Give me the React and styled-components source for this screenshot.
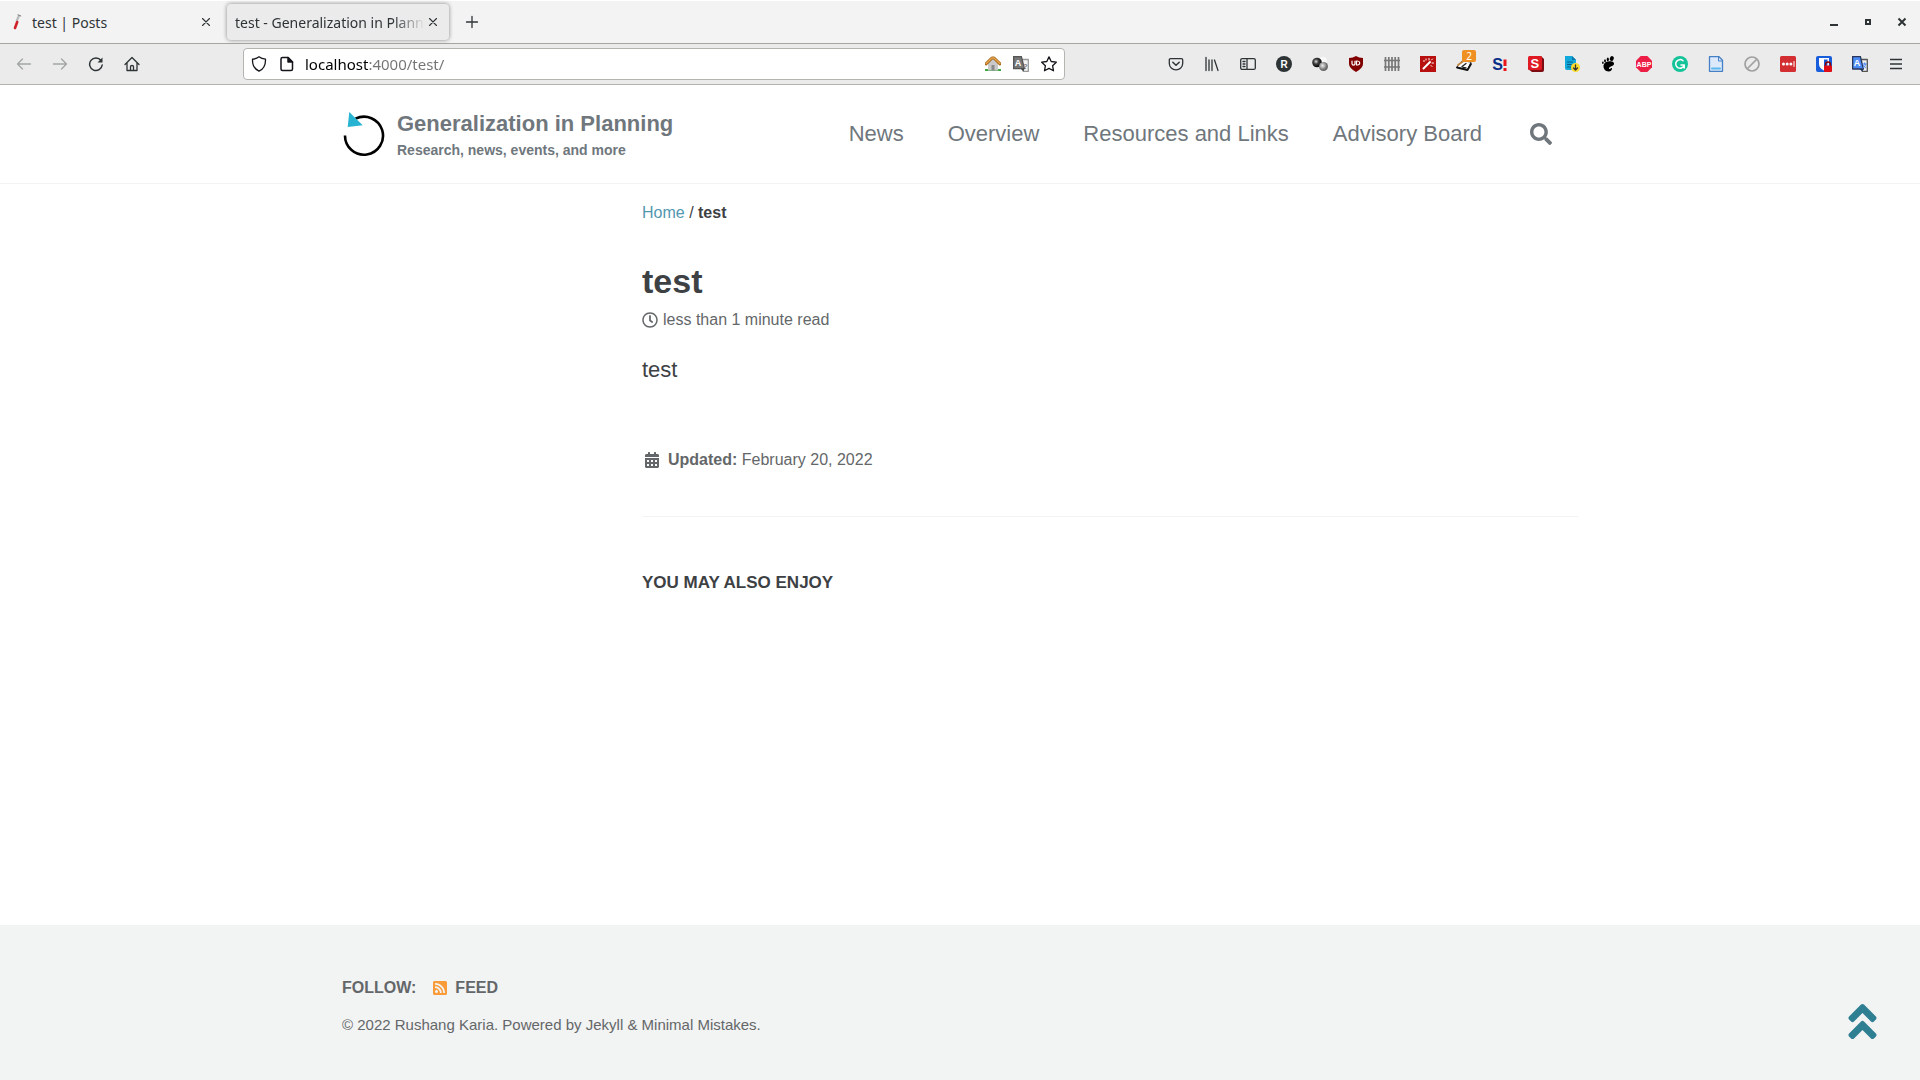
import React from 'react';
import styled, { createGlobalStyle, css } from 'styled-components';
import {
  FaSearch,
  FaRegClock,
  FaCalendarAlt,
  FaRssSquare,
  FaAngleDoubleUp,
} from 'react-icons/fa';

const GlobalStyle = createGlobalStyle`
  * {
    box-sizing: border-box;
  }
  body {
    margin: 0;
    background: #fff;
    color: #3d4144;
    font-family: "Liberation Sans", Arial, sans-serif;
    font-size: 16px;
  }
  button {
    padding: 0;
    border: 0;
    background: none;
    color: inherit;
    font: inherit;
  }
  a {
    color: inherit;
    text-decoration: none;
  }
`;

const chromeFont = '"Noto Sans", "Open Sans", sans-serif';
const ink = '#2e3436';

const Window = styled.div`
  display: flex;
  flex-direction: column;
  min-height: 100vh;
`;

/* browser chrome */

const TabStrip = styled.div`
  display: flex;
  align-items: center;
  height: 44px;
  padding-right: 1px;
  border-top: 1px solid #fff;
  border-bottom: 1px solid #a6a6a2;
  background: #f3f3f3;
  color: ${ink};
  font-family: ${chromeFont};
  font-size: 14px;
`;

const Tab = styled.div`
  display: flex;
  align-items: center;
  gap: 8px;
  width: 222px;
  height: 36px;
  padding: 0 8px;
  border-radius: 4px;
  ${props => props.$active && css`
    background: #ebebeb;
    box-shadow: 0 0 4px rgba(0, 0, 0, 0.45);
  `}
`;

const TabList = styled.div`
  display: flex;
  gap: 5px;
  flex: 1;
`;

const TabTitle = styled.span`
  flex: 1;
  min-width: 0;
  overflow: hidden;
  white-space: nowrap;
  ${props => props.$fade && css`
    mask-image: linear-gradient(to left, transparent, #000 32px);
  `}
`;

const TabClose = styled.button`
  display: flex;
  width: 16px;
  height: 16px;
  align-items: center;
  justify-content: center;
  margin-left: -8px;
`;

const IconButton = styled.button`
  display: flex;
  align-items: center;
  justify-content: center;
  position: relative;
  width: 36px;
  height: 36px;
  flex: none;
  color: ${props => (props.disabled ? '#a3a6a6' : ink)};
`;

const WindowButton = styled(IconButton)`
  width: 34px;
`;

const NavBar = styled.div`
  display: flex;
  align-items: center;
  height: 41px;
  padding: 0 6px;
  border-bottom: 1px solid #b4b4b0;
  background: #ebebeb;
  font-family: ${chromeFont};
`;

const NavGroup = styled.div`
  display: flex;
  flex: ${props => (props.$grow ? '1' : 'none')};
  justify-content: ${props => (props.$grow ? 'flex-end' : 'flex-start')};
`;

const AddressBar = styled.div`
  display: flex;
  align-items: center;
  flex: 0 1 822px;
  height: 32px;
  margin-left: 93px;
  padding: 0 1px;
  border: 1px solid #b4b4b0;
  border-radius: 4px;
  background: #fff;
`;

const AddressIcon = styled(IconButton)`
  width: 28px;
  height: 28px;
  color: #15141a;
`;

const Address = styled.input`
  flex: 1;
  min-width: 0;
  padding: 0;
  margin-left: 4px;
  border: 0;
  outline: 0;
  background: linear-gradient(to right, #000 64px, #737373 64px);
  background-clip: text;
  -webkit-text-fill-color: transparent;
  font-family: ${chromeFont};
  font-size: 15px;
`;

const Badge = styled.span`
  position: absolute;
  top: 4px;
  right: 6px;
  width: 14px;
  border-radius: 2px;
  background: #ef9022;
  color: #fff;
  font-size: 10px;
  line-height: 12px;
`;

/* site */

const Container = styled.div`
  width: 100%;
  max-width: 1280px;
  margin: 0 auto;
  padding: 0 22px;
`;

const Masthead = styled.header`
  padding: 25px 0 19px;
  border-bottom: 1px solid #f2f3f3;
  color: #6f777d;
`;

const MastheadInner = styled(Container)`
  display: flex;
  align-items: flex-start;
`;

const Brand = styled.a`
  display: flex;
  gap: 11px;
  flex: 1;
  font-size: 22px;
  font-weight: bold;
  line-height: 27px;
`;

const Tagline = styled.small`
  display: block;
  font-size: 14px;
`;

const SiteNav = styled.nav`
  display: flex;
  align-items: center;
  gap: 44px;
  font-size: 22px;
  line-height: 48px;
`;

const SearchButton = styled.button`
  display: flex;
  align-items: center;
  height: 46px;
  padding: 0 26px 0 4px;
`;

const Main = styled.main`
  flex: 1;
`;

const Page = styled(Container)`
  line-height: 24px;
`;

const Article = styled.div`
  margin-left: 300px;
  padding-top: 17px;
`;

const HomeLink = styled.a`
  color: #5297af;
`;

const Title = styled.h1`
  margin: 34px 0 5px;
  font-size: 34px;
  line-height: 44px;
`;

const Meta = styled.p`
  display: flex;
  align-items: center;
  gap: 5px;
  margin: 0;
  color: #646769;
`;

const Updated = styled(Meta)`
  gap: 8px;
  padding-left: 2px;
`;

const Body = styled.p`
  margin: 22px 0 62px;
  font-size: 22px;
  line-height: 32px;
`;

const Related = styled.section`
  margin-top: 44px;
  padding-top: 54px;
  border-top: 1px solid #f2f3f3;
`;

const RelatedTitle = styled.h2`
  margin: 0;
  font-size: 17px;
  text-transform: uppercase;
`;

const Footer = styled.footer`
  padding: 51px 0 43px;
  background: #f2f3f3;
  color: #646769;
  line-height: 24px;
`;

const Follow = styled.div`
  display: flex;
  align-items: center;
  gap: 16px;
  margin-bottom: 13px;
  font-weight: bold;
  text-transform: uppercase;
`;

const FeedLink = styled.a`
  display: flex;
  align-items: center;
  gap: 7px;
`;

const Copyright = styled.div`
  font-size: 15px;
`;

const TopLink = styled.a`
  position: fixed;
  right: 35px;
  bottom: 36px;
  display: flex;
  color: #2f7f93;
  font-size: 45px;
`;

const Icon = ({ size = 16, children, ...rest }) => (
  <svg
    width={size}
    height={size}
    viewBox="0 0 16 16"
    fill="none"
    stroke="currentColor"
    strokeWidth="1.3"
    strokeLinecap="round"
    strokeLinejoin="round"
    aria-hidden="true"
    {...rest}
  >
    {children}
  </svg>
);

const Glyph = ({ x = 8, y = 12, size = 10, fill = '#fff', children }) => (
  <text
    x={x}
    y={y}
    fill={fill}
    stroke="none"
    fontFamily="Liberation Sans, Arial, sans-serif"
    fontSize={size}
    fontWeight="bold"
    textAnchor="middle"
  >
    {children}
  </text>
);

const CloseIcon = () => (
  <Icon strokeWidth="1.1"><path d="M4.500 4.500l7 7M11.500 4.500l-7 7" /></Icon>
);

const Logo = () => (
  <svg width="44" height="48" viewBox="0 0 44 48" aria-hidden="true">
    <path d="M3 25.5A19 19 0 1 0 13.5 8.7" fill="none" stroke="#000" strokeWidth="2.6" />
    <path d="M7.3 2L5.7 17L20.7 15.3Z" fill="#27b3d2" />
  </svg>
);

const extensions = [
  {
    name: 'Save to Pocket',
    icon: (
      <Icon>
        <path d="M2.5 2.6h11q1.2 0 1.2 1.2v3.6a6.7 6.4 0 0 1-13.4 0V3.8q0-1.2 1.2-1.2z" />
        <path d="M4.8 6.2L8 9.2l3.2-3" strokeWidth="1.5" />
      </Icon>
    ),
  },
  {
    name: 'Library',
    icon: <Icon><path d="M2 1.5v13M5 4v10.500M8 4v10.500M10.500 4l3.500 10.500" /></Icon>,
  },
  {
    name: 'Sidebars',
    icon: (
      <Icon>
        <rect x=".7" y="2.600" width="14.600" height="10.800" rx="1.500" />
        <path d="M7 2.600v10.800M3 5.500h2M3 8h2M3 10.500h2" />
      </Icon>
    ),
  },
  {
    name: 'Reader',
    icon: (
      <Icon>
        <circle cx="8" cy="8" r="8" fill={ink} stroke="none" />
        <Glyph y={11.500}>R</Glyph>
      </Icon>
    ),
  },
  {
    name: 'Spheres',
    icon: (
      <Icon stroke="none">
        <defs>
          <radialGradient id="darkBall" cx=".4" cy=".4">
            <stop offset="0" stopColor="#ddd" />
            <stop offset=".5" stopColor="#444" />
            <stop offset="1" stopColor="#111" />
          </radialGradient>
          <radialGradient id="greyBall" cx=".4" cy=".4">
            <stop offset="0" stopColor="#eee" />
            <stop offset="1" stopColor="#666" />
          </radialGradient>
        </defs>
        <circle cx="11" cy="4.500" r="3.800" fill="#f8f8f8" />
        <circle cx="5" cy="6.500" r="4.800" fill="url(#darkBall)" />
        <circle cx="11.500" cy="10.500" r="4.500" fill="url(#greyBall)" />
      </Icon>
    ),
  },
  {
    name: 'uBlock Origin',
    icon: (
      <Icon stroke="none">
        <path d="M8 0q3 2 7 2v6q0 4-7 8Q1 12 1 8V2q4 0 7-2z" fill="#800000" />
        <path d="M4 5v2.500q0 1.700 1.500 1.700T7 7.500V5M8.500 9V5h1q2 0 2.300 2-.3 2-2.300 2z" stroke="#fff" strokeWidth="1.200" />
      </Icon>
    ),
  },
  {
    name: 'Fence',
    icon: (
      <Icon stroke="#777" strokeLinecap="butt">
        <path d="M1.500 1v14M4.800 1v14M8 1v14M11.200 1v14M14.500 1v14" strokeWidth="1.700" />
        <path d="M0 4.500h16M0 11h16" />
      </Icon>
    ),
  },
  {
    name: 'Magic Wand',
    icon: (
      <Icon stroke="#fff">
        <rect width="16" height="16" fill="#b7100f" stroke="none" />
        <path d="M3.500 12.500L10 6" strokeWidth="2" />
        <path d="M6 3v1M9 2.500v1.500M12.500 3l-1 1M12 7h1.500M11 9.500l1 1M3.500 5h1" strokeWidth="1" />
      </Icon>
    ),
  },
  {
    name: 'Notes',
    badge: '2',
    icon: (
      <Icon>
        <path d="M1 11l5-6 9 1-3.500 7.500z" fill="#fff" stroke="#333" strokeWidth="1" />
        <path d="M1 11.500l10.500 2.500L15 8" stroke="#111" strokeWidth="1.800" />
        <path d="M2 9l7-5" stroke="#c48948" strokeWidth="2" />
        <path d="M6 10.500l4-3M7 11.500l3 .3" stroke="#222" />
      </Icon>
    ),
  },
  {
    name: 'Startpage',
    icon: (
      <Icon>
        <Glyph x={5.500} y={13.500} size={16} fill="#092f88">S</Glyph>
        <path d="M13 3.500v6.500" stroke="#e9151b" strokeWidth="3" strokeLinecap="butt" />
        <path d="M13 12v3" stroke="#e9151b" strokeWidth="3" strokeLinecap="butt" />
      </Icon>
    ),
  },
  {
    name: 'Stylish',
    icon: (
      <Icon stroke="none">
        <path d="M2 0h11l3 3v11q0 2-2 2H4l-4-3z" fill="#7d0c12" />
        <rect width="14" height="14" rx="1.500" fill="#df1a22" />
        <Glyph x={6.800} y={11.500} size={13}>S</Glyph>
      </Icon>
    ),
  },
  {
    name: 'Save Page',
    icon: (
      <Icon stroke="none">
        <path d="M1 0h7l4 4v10H3q-2 0-2-2z" fill="#11a9dc" />
        <path d="M8 0v4h4z" fill="#0877a7" />
        <path d="M3.500 6h5M3.500 8.500h5M3.500 11h3" stroke="#075b82" strokeWidth="1" />
        <circle cx="11.500" cy="11.500" r="4.500" fill="#fcdb2e" />
        <path d="M11.500 9v5M9.500 12l2 2 2-2" stroke="#333" />
      </Icon>
    ),
  },
  {
    name: 'GNOME Shell',
    icon: (
      <Icon fill="#000" stroke="none">
        <path d="M12 5.500c-4-1-8 .5-8.500 4-.4 3 2 6 5 6 2.500 0 3.500-1.700 3.500-3.200 0-.6-.6-.5-1 0-.8 1.200-2.300 1-2-.2.500-2 5.300-2 5-4.700-.1-1-.9-1.600-2-1.900z" />
        <ellipse cx="11.800" cy="2.500" rx="1.900" ry="2.500" transform="rotate(20 11.800 2.500)" />
        <ellipse cx="7.800" cy="3.400" rx="1.100" ry="1.800" />
        <ellipse cx="5" cy="4.800" rx=".9" ry="1.500" />
        <ellipse cx="2.900" cy="6.700" rx=".8" ry="1.200" />
      </Icon>
    ),
  },
  {
    name: 'Adblock Plus',
    icon: (
      <Icon stroke="none">
        <path d="M4.700 0h6.600L16 4.700v6.600L11.300 16H4.700L0 11.300V4.700z" fill="#ed1e45" />
        <Glyph y={10.500} size={7}>ABP</Glyph>
      </Icon>
    ),
  },
  {
    name: 'Grammarly',
    icon: (
      <Icon>
        <circle cx="8" cy="8" r="8" fill="#15c39a" stroke="none" />
        <path d="M11 4.800A4.300 4.300 0 1 0 12.200 9H9M12.200 9v3" stroke="#fff" strokeWidth="1.500" />
      </Icon>
    ),
  },
  {
    name: 'Document',
    icon: (
      <Icon>
        <path d="M1.500.7h9.500l3.500 3.500v11.100h-13z" fill="#dce9fb" stroke="#4580c6" />
        <path d="M10.500 1v4h4" stroke="#4580c6" strokeWidth="1" />
        <path d="M4 12.500h8" stroke="#5eb9ec" strokeWidth="2" />
      </Icon>
    ),
  },
  {
    name: 'Blocker',
    icon: (
      <Icon stroke="#a0a0a0" strokeWidth="1.700">
        <circle cx="8" cy="8" r="7" />
        <path d="M4 12l8-8" />
      </Icon>
    ),
  },
  {
    name: 'LastPass',
    icon: (
      <Icon stroke="none">
        <rect width="16" height="16" rx="1.500" fill="#d32f32" />
        <circle cx="3.500" cy="8" r="1.500" fill="#fff" />
        <circle cx="7.200" cy="8" r="1.500" fill="#fff" />
        <circle cx="10.900" cy="8" r="1.500" fill="#fff" />
        <path d="M14 5.500v5" stroke="#fff" strokeWidth="1" />
      </Icon>
    ),
  },
  {
    name: 'Bitwarden',
    icon: (
      <Icon stroke="none">
        <rect width="16" height="16" rx="2" fill="#175ddc" />
        <path d="M3 2h10v6q0 4-5 6.500Q3 12 3 8z" fill="#fff" />
        <path d="M8 3.500h3.500V8q0 2.500-3.500 4.500z" fill="#175ddc" />
        <path d="M9.500 10V8.500a2.500 2.500 0 0 1 5 0V10" stroke="#8b0000" />
        <rect x="8" y="9.500" width="8" height="6.500" rx="1" fill="#e00d16" />
      </Icon>
    ),
  },
  {
    name: 'Translate',
    icon: (
      <Icon>
        <path d="M8 3.500h7.300v12h-5z" fill="#eee" stroke="#555" />
        <path d="M.6.600h7.800l3 12.400H.6z" fill="#4d8bf5" stroke="#28365d" />
        <path d="M7.500 13l3 2.600.9-2.600z" fill="#28365d" stroke="none" />
        <Glyph x={5} y={10} size={9}>A</Glyph>
        <path d="M10.800 8h3.500M12.500 7v1M13.800 8q-.5 3-2.800 4M11.500 9.500l2.300 2.500" stroke="#4d8bf5" strokeWidth="1" />
      </Icon>
    ),
  },
  {
    name: 'Open menu',
    icon: <Icon strokeWidth="1.300" strokeLinecap="butt"><path d="M2 3.500h12M2 8h12M2 12.500h12" /></Icon>,
  },
];

const links = ['News', 'Overview', 'Resources and Links', 'Advisory Board'];

const BrowserTabs = () => (
  <TabStrip>
    <TabList>
      <Tab>
        <Icon>
          <path d="M8.500 7.500L11 1.500" stroke="#b9b9b9" strokeWidth="2.200" strokeLinecap="butt" />
          <path d="M10 .8l2.800 1.200" stroke="#777" strokeWidth="1" />
          <path d="M7 14L9.200 8" stroke="#cf222b" strokeWidth="2.600" />
        </Icon>
        <TabTitle>test | Posts</TabTitle>
        <TabClose aria-label="Close tab"><CloseIcon /></TabClose>
      </Tab>
      <Tab $active>
        <TabTitle $fade>test - Generalization in Planning</TabTitle>
        <TabClose aria-label="Close tab"><CloseIcon /></TabClose>
      </Tab>
      <IconButton aria-label="New tab">
        <Icon><path d="M8 2.500v11M2.500 8h11" /></Icon>
      </IconButton>
    </TabList>
    <WindowButton aria-label="Minimize">
      <Icon strokeWidth="2" strokeLinecap="butt"><path d="M4 11h8" /></Icon>
    </WindowButton>
    <WindowButton aria-label="Restore">
      <Icon strokeWidth="2" strokeLinejoin="miter"><path d="M6 6h4v4H6z" /></Icon>
    </WindowButton>
    <WindowButton aria-label="Close window">
      <Icon strokeWidth="2" strokeLinecap="butt"><path d="M4.500 4.500l7 7M11.500 4.500l-7 7" /></Icon>
    </WindowButton>
  </TabStrip>
);

const BrowserToolbar = () => (
  <NavBar>
    <NavGroup>
      <IconButton disabled aria-label="Back">
        <Icon><path d="M14.500 8h-13M6.500 3L1.500 8l5 5" /></Icon>
      </IconButton>
      <IconButton disabled aria-label="Forward">
        <Icon><path d="M1.500 8h13M9.500 3l5 5-5 5" /></Icon>
      </IconButton>
      <IconButton aria-label="Reload">
        <Icon strokeWidth="1.500">
          <path d="M13 4.500A6.300 6.300 0 1 0 14.200 9" />
          <path d="M14.500 1.500v5h-5z" fill="currentColor" stroke="none" />
        </Icon>
      </IconButton>
      <IconButton aria-label="Home">
        <Icon>
          <path d="M1 8.500L8 1.500l7 7M3 7v7.500h10V7M6.500 14.500v-4q0-1 1.500-1t1.500 1v4" />
        </Icon>
      </IconButton>
    </NavGroup>
    <AddressBar>
      <AddressIcon aria-label="Tracking protection">
        <Icon><path d="M8 .8Q10.500 2.800 14.500 3.200 14.800 12 8 15.200 1.200 12 1.500 3.200 5.500 2.800 8 .8z" /></Icon>
      </AddressIcon>
      <AddressIcon aria-label="Site information">
        <Icon strokeWidth="1.500">
          <path d="M3.500 1.500H9l4.500 4.500v7q0 1.500-1.500 1.500H3.500Q2 14.500 2 13V3q0-1.500 1.500-1.500z" />
          <path d="M9 1.500V6h4.500z" fill="currentColor" />
        </Icon>
      </AddressIcon>
      <Address aria-label="Address" defaultValue="localhost:4000/test/" spellCheck="false" />
      <AddressIcon aria-label="Home page">
        <Icon stroke="none">
          <path d="M0 13h16v2H0z" fill="#42a846" />
          <path d="M3 7l5-5 5 5v7.500H3z" fill="#c9c9c9" />
          <path d="M6.500 9h3v5.500h-3z" fill="#8a8a8a" />
          <path d="M1 7.800L7 2h2l6 5.800" stroke="#a4641b" strokeWidth="3" />
          <path d="M1.200 7.500L7 2h2l5.800 5.500" stroke="#e4a54b" strokeWidth="1.500" />
        </Icon>
      </AddressIcon>
      <AddressIcon aria-label="Translate this page">
        <Icon>
          <path d="M8 3.500h7.300v12h-5z" fill="#f4f4f4" stroke="#999" />
          <path d="M.6.600h7.800l3 12H.6z" fill="#777" stroke="#555" />
          <path d="M7.500 12.500l3 2.900.9-2.900z" fill="#444" stroke="none" />
          <Glyph x={5} y={10} size={9}>A</Glyph>
          <Glyph x={12.500} y={12.500} size={7} fill="#777">?</Glyph>
        </Icon>
      </AddressIcon>
      <AddressIcon aria-label="Bookmark this page">
        <Icon>
          <path d="M8 .9l2.200 4.600 5.100.7-3.700 3.500.9 5.100L8 12.400l-4.500 2.400.9-5.100L.7 6.200l5.100-.7z" />
        </Icon>
      </AddressIcon>
    </AddressBar>
    <NavGroup $grow>
      {extensions.map(({ name, icon, badge }) => (
        <IconButton key={name} aria-label={name}>
          {icon}
          {badge && <Badge>{badge}</Badge>}
        </IconButton>
      ))}
    </NavGroup>
  </NavBar>
);

const App = () => (
  <Window>
    <GlobalStyle />
    <BrowserTabs />
    <BrowserToolbar />
    <Masthead>
      <MastheadInner>
        <Brand href="#home">
          <Logo />
          <span>
            Generalization in Planning
            <Tagline>Research, news, events, and more</Tagline>
          </span>
        </Brand>
        <SiteNav>
          {links.map(link => <a key={link} href="#nav">{link}</a>)}
          <SearchButton aria-label="Search"><FaSearch /></SearchButton>
        </SiteNav>
      </MastheadInner>
    </Masthead>
    <Main>
      <Page>
        <Article>
          <nav>
            <HomeLink href="#home">Home</HomeLink> / <strong>test</strong>
          </nav>
          <Title>test</Title>
          <Meta><FaRegClock /> less than 1 minute read</Meta>
          <Body>test</Body>
          <Updated>
            <FaCalendarAlt />
            <span><strong>Updated:</strong> February 20, 2022</span>
          </Updated>
          <Related>
            <RelatedTitle>You may also enjoy</RelatedTitle>
          </Related>
        </Article>
      </Page>
    </Main>
    <Footer>
      <Container>
        <Follow>
          <span>Follow:</span>
          <FeedLink href="#feed"><FaRssSquare color="#fa9b39" /> Feed</FeedLink>
        </Follow>
        <Copyright>
          © 2022 Rushang Karia. Powered by <a href="#jekyll">Jekyll</a> &amp; <a href="#theme">Minimal Mistakes</a>.
        </Copyright>
      </Container>
    </Footer>
    <TopLink href="#top" aria-label="Back to top"><FaAngleDoubleUp /></TopLink>
  </Window>
);

export default App;
